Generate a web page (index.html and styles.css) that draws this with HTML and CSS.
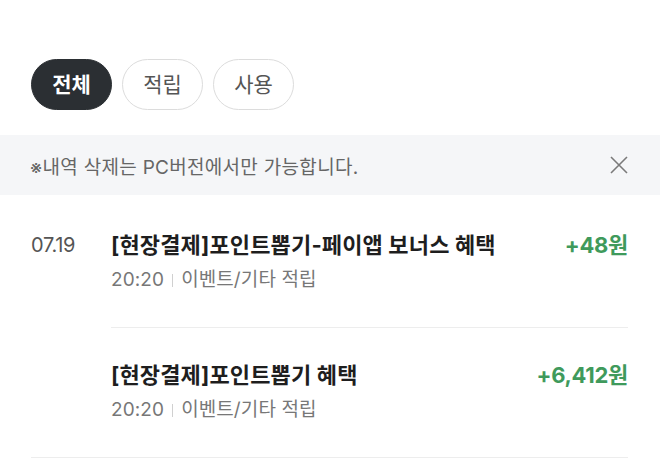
FILE: index.html
```html
<!DOCTYPE html>
<html lang="ko">
<head>
<meta charset="utf-8">
<link rel="stylesheet" href="styles.css">
</head>
<body>
<div class="tabs">
  <button class="chip active">전체</button>
  <button class="chip">적립</button>
  <button class="chip">사용</button>
</div>
<div class="notice">
  <span class="notice-text">※내역 삭제는 PC버전에서만 가능합니다.</span>
  <svg class="close" width="18" height="18" viewBox="0 0 18 18"><path d="M1 1L17 17M17 1L1 17" stroke="#7a7a7a" stroke-width="1.6" fill="none"/></svg>
</div>
<div class="list">
  <div class="item">
    <div class="date">07.19</div>
    <div class="main">
      <div class="info">
        <div class="title">[현장결제]포인트뽑기-페이앱 보너스 혜택</div>
        <div class="sub">20:20<span class="bar"></span>이벤트/기타 적립</div>
      </div>
      <div class="amount">+48원</div>
    </div>
  </div>
  <div class="item last">
    <div class="date"></div>
    <div class="main">
      <div class="info">
        <div class="title">[현장결제]포인트뽑기 혜택</div>
        <div class="sub">20:20<span class="bar"></span>이벤트/기타 적립</div>
      </div>
      <div class="amount">+6,412원</div>
    </div>
  </div>
</div>
</body>
</html>
```
FILE: styles.css
```css
* { box-sizing: border-box; }
body {
  margin: 0;
  background: #fff;
  font-family: "Inter", "Noto Sans CJK KR", sans-serif;
  color: #222;
}
.tabs {
  display: flex;
  gap: 10px;
  padding: 59px 0 0 31px;
}
.chip {
  height: 51px;
  min-width: 81px;
  padding: 0 19px;
  border-radius: 26px;
  border: 1.5px solid #dcdcdc;
  background: #fff;
  color: #555;
  font-family: inherit;
  font-size: 21px;
  font-weight: 400;
  line-height: 1;
}
.chip.active {
  background: #2b2f33;
  border-color: #2b2f33;
  color: #fff;
  font-weight: 700;
}
.notice {
  margin-top: 25px;
  height: 60px;
  background: #f5f6f8;
  display: flex;
  align-items: center;
  justify-content: space-between;
  padding: 0 32px 0 30px;
}
.notice-text {
  font-size: 19px;
  color: #666;
  letter-spacing: 0.3px;
}
.close { display: block; }
.list {
  margin: 0 32px 0 31px;
  padding-top: 3px;
  border-bottom: 1px solid #ededed;
}
.item {
  display: flex;
}
.date {
  width: 80px;
  flex: none;
  padding-top: 32px;
  font-size: 20px;
  line-height: 30px;
  color: #555;
  letter-spacing: -0.3px;
}
.main {
  flex: 1;
  display: flex;
  justify-content: space-between;
  padding: 32px 0 34px;
  border-bottom: 1px solid #ededed;
}
.item.last .main { border-bottom: none; }
.title {
  font-size: 22px;
  line-height: 30px;
  font-weight: 700;
  color: #1e1e1e;
  letter-spacing: 0.15px;
}
.sub {
  margin-top: 7px;
  font-size: 19px;
  line-height: 26px;
  color: #777;
  letter-spacing: 0.1px;
  display: flex;
  align-items: center;
}
.bar {
  display: inline-block;
  width: 1px;
  height: 13px;
  background: #d0d0d0;
  margin: 0 8px;
}
.amount {
  font-size: 22px;
  line-height: 30px;
  font-weight: 700;
  color: #3f9a5c;
  letter-spacing: -0.3px;
  white-space: nowrap;
}
```
